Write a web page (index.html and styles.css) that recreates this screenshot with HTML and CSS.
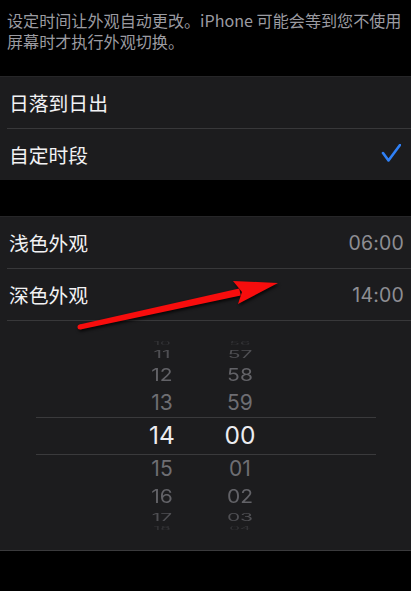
FILE: index.html
```html
<!DOCTYPE html>
<html lang="zh-CN">
<head>
<meta charset="utf-8">
<link rel="stylesheet" href="styles.css">
</head>
<body>
<div class="screen">
  <p class="note">设定时间让外观自动更改。iPhone 可能会等到您不使用屏幕时才执行外观切换。</p>

  <div class="group g1">
    <div class="row"><span class="label">日落到日出</span></div>
    <div class="row">
      <span class="label">自定时段</span>
      <svg class="check" width="20" height="20" viewBox="0 0 20 20"><polyline points="2,9 7.5,16.5 19,1" fill="none" stroke="#2f80f6" stroke-width="2.6" stroke-linecap="round" stroke-linejoin="round"/></svg>
    </div>
  </div>

  <div class="group g2">
    <div class="row"><span class="label">浅色外观</span><span class="value">06:00</span></div>
    <div class="row"><span class="label">深色外观</span><span class="value">14:00</span></div>
    <div class="picker">
      <div class="band"></div>
      <div class="wheels">
        <div class="wheel">
          <div class="cell c10"><span>10</span></div>
          <div class="cell c11"><span>11</span></div>
          <div class="cell c12"><span>12</span></div>
          <div class="cell c13"><span>13</span></div>
          <div class="cell c14"><span>14</span></div>
          <div class="cell c15"><span>15</span></div>
          <div class="cell c16"><span>16</span></div>
          <div class="cell c17"><span>17</span></div>
          <div class="cell c18"><span>18</span></div>
        </div>
        <div class="wheel">
          <div class="cell c10"><span>56</span></div>
          <div class="cell c11"><span>57</span></div>
          <div class="cell c12"><span>58</span></div>
          <div class="cell c13"><span>59</span></div>
          <div class="cell c14"><span>00</span></div>
          <div class="cell c15"><span>01</span></div>
          <div class="cell c16"><span>02</span></div>
          <div class="cell c17"><span>03</span></div>
          <div class="cell c18"><span>04</span></div>
        </div>
      </div>
    </div>
  </div>

  <svg class="arrow" width="411" height="591" viewBox="0 0 411 591">
    <g fill="#f70d0d">
      <polygon points="79.5,324.6 80.5,329.4 240.8,295.4 239.2,288.6"/>
      <circle cx="80" cy="327" r="2.5"/>
      <polygon points="278,283 233,281 242,292 238,304"/>
    </g>
  </svg>
</div>
</body>
</html>
```

FILE: styles.css
```css
html, body {
  margin: 0;
  padding: 0;
  background: #000;
}
.screen {
  position: relative;
  width: 411px;
  height: 591px;
  overflow: hidden;
  background: #000;
  font-family: "Inter", "Noto Sans CJK SC", sans-serif;
}
.note {
  margin: 0;
  padding: 10px 4px 0 7px;
  height: 66px;
  font-family: "Noto Sans CJK SC", "Inter", sans-serif;
  font-size: 16.1px;
  line-height: 21px;
  color: #9b9ba1;
  letter-spacing: 0;
}
.group {
  background: #1c1c1e;
  border-top: 1px solid #262628;
}
.g1 {
  margin-bottom: 36px;
}
.g2 {
  border-bottom: 1px solid #3a3a3c;
}
.row {
  height: 52px;
  margin-left: 7px;
  padding-left: 2px;
  padding-right: 7px;
  display: flex;
  align-items: center;
  justify-content: space-between;
  border-bottom: 1px solid #38383a;
  box-sizing: border-box;
}
.g1 .row:last-child {
  border-bottom: none;
  height: 51px;
}
.label {
  font-family: "Noto Sans CJK SC", sans-serif;
  font-size: 19.8px;
  color: #f2f2f4;
}
.value {
  font-family: "Inter", sans-serif;
  font-size: 19.5px;
  color: #8e8e93;
  letter-spacing: 0.2px;
}
.check {
  margin-right: 3px;
  margin-top: -2px;
}
.picker {
  position: relative;
  height: 229px;
  padding-top: 18px;
  box-sizing: border-box;
}
.band {
  position: absolute;
  left: 36px;
  right: 35px;
  top: 96px;
  height: 36px;
  border-top: 1px solid #3a3a3c;
  border-bottom: 1px solid #3a3a3c;
}
.wheels {
  display: flex;
  gap: 8px;
  padding-left: 127px;
  height: 194px;
  overflow: hidden;
}
.wheel {
  width: 70px;
  display: flex;
  flex-direction: column;
}
.cell {
  display: flex;
  align-items: center;
  justify-content: center;
  font-size: 21px;
  color: #6e6e73;
  line-height: 1;
}
.cell span {
  display: block;
}
.c10 { height: 8px; color: #333336; font-size: 17px; }
.c10 span { transform: scaleY(0.25); }
.c11 { height: 14px; color: #4f4f53; }
.c11 span { transform: scaleY(0.5); }
.c12 { height: 28px; color: #626267; }
.c12 span { transform: scaleY(0.82); }
.c13 { height: 29px; color: #6e6e73; }
.c14 { height: 37px; font-size: 24.5px; color: #ececf0; }
.c15 { height: 29px; color: #6e6e73; }
.c16 { height: 28px; color: #626267; }
.c16 span { transform: scaleY(0.87); }
.c17 { height: 15px; color: #4f4f53; }
.c17 span { transform: scaleY(0.5); }
.c18 { height: 8px; color: #333336; font-size: 17px; }
.c18 span { transform: scaleY(0.25); }
.arrow {
  position: absolute;
  left: 0;
  top: 0;
  pointer-events: none;
  filter: drop-shadow(1px 2px 1.5px rgba(0,0,0,0.75));
}
```
